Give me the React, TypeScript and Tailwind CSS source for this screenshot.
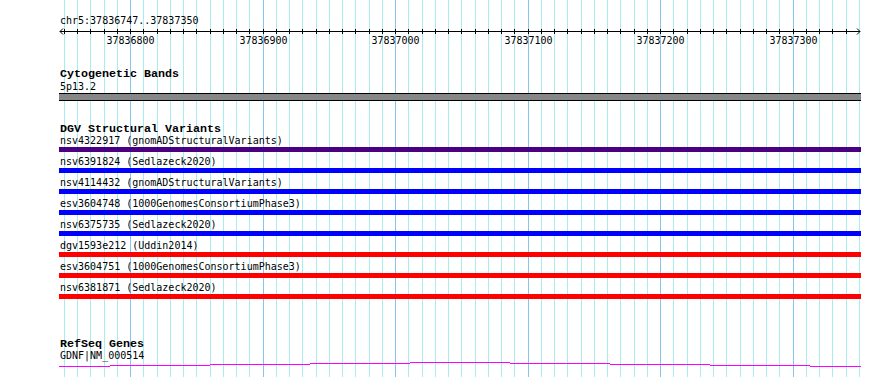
import React from "react";

const GRID = Array.from({ length: 61 }, (_, k) => ({
  x: Math.floor(64.25 + 13.25 * k) + 0.5,
  major: k % 10 === 5,
}));

const LABELS = [0, 1, 2, 3, 4, 5].map((j) => ({
  x: GRID[5 + 10 * j].x - 59,
  text: String(37836800 + 100 * j),
}));

const ROWS: { label: string; color: string }[] = [
  { label: "nsv4322917 (gnomADStructuralVariants)", color: "bg-[#4b0082]" },
  { label: "nsv6391824 (Sedlazeck2020)", color: "bg-[#0000ff]" },
  { label: "nsv4114432 (gnomADStructuralVariants)", color: "bg-[#0000ff]" },
  { label: "esv3604748 (1000GenomesConsortiumPhase3)", color: "bg-[#0000ff]" },
  { label: "nsv6375735 (Sedlazeck2020)", color: "bg-[#0000ff]" },
  { label: "dgv1593e212 (Uddin2014)", color: "bg-[#ff0000]" },
  { label: "esv3604751 (1000GenomesConsortiumPhase3)", color: "bg-[#ff0000]" },
  { label: "nsv6381871 (Sedlazeck2020)", color: "bg-[#ff0000]" },
];

// magenta gene line steps (x in track coords, y in svg coords)
const STEPS = [
  [0, 51, 6],
  [51, 151, 5],
  [151, 251, 4],
  [251, 351, 3],
  [351, 451, 2],
  [451, 551, 3],
  [551, 651, 4],
  [651, 751, 5],
  [751, 802, 6],
];

const mono = "font-['DejaVu_Sans_Mono',monospace]";
const bold = "font-['Liberation_Mono',monospace] font-bold text-[11.67px] leading-[12px] text-black";

export default function App() {
  return (
    <div className="relative w-[890px] h-[377px] overflow-hidden bg-white">
      <svg
        className="absolute inset-0 pointer-events-none"
        width={890}
        height={377}
        shapeRendering="crispEdges"
      >
        {GRID.map((g, i) => (
          <line
            key={i}
            x1={g.x}
            x2={g.x}
            y1={0}
            y2={377}
            stroke={g.major ? "#86c6ee" : "#a8ecee"}
            strokeWidth={1}
          />
        ))}
      </svg>
      <div className={`relative ml-[59px] w-[802px] ${mono} text-[10px] text-black`}>
        <div className="mt-[15px] h-[12px] leading-[12px] pl-[1px]">chr5:37836747..37837350</div>
        <svg width={802} height={19} className="block" shapeRendering="crispEdges">
          <line x1={1} x2={801} y1={4.5} y2={4.5} stroke="#000" strokeWidth={1} />
          <polyline points="4,1.5 1,4.5 4,7.5" fill="none" stroke="#000" strokeWidth={1} shapeRendering="auto" />
          <polyline points="798,1.5 801,4.5 798,7.5" fill="none" stroke="#000" strokeWidth={1} shapeRendering="auto" />
          {GRID.slice(0, 60).map((g, i) => (
            <line key={i} x1={g.x - 59} x2={g.x - 59} y1={2} y2={7} stroke="#000" strokeWidth={1} />
          ))}
          {LABELS.map((l) => (
            <text
              key={l.text}
              x={l.x}
              y={17}
              textAnchor="middle"
              fontFamily="'DejaVu Sans Mono', monospace"
              fontSize={10}
              fill="#000"
            >
              {l.text}
            </text>
          ))}
        </svg>

        <div className={`mt-[22px] h-[13px] ${bold} leading-[13px] pl-[1px]`}>Cytogenetic Bands</div>
        <div className="h-[12px] leading-[12px] pl-[1px]">5p13.2</div>
        <div className="h-[8px] border-y border-black bg-[#878787]" />

        <div className={`mt-[22px] h-[12px] ${bold} pl-[1px]`}>DGV Structural Variants</div>
        <div className="flex flex-col">
          {ROWS.map((r, i) => (
            <div key={r.label} className={i === 0 ? "" : "pt-[4px]"}>
              <div className="h-[12px] leading-[12px] pl-[1px] whitespace-nowrap">{r.label}</div>
              <div className={`h-[5px] ${r.color}`} />
            </div>
          ))}
        </div>

        <div className={`mt-[39px] h-[12px] ${bold} pl-[1px]`}>RefSeq Genes</div>
        <div className="h-[10px] leading-[12px] pl-[1px]">GDNF|NM_000514</div>
        <svg width={802} height={8} className="block" shapeRendering="crispEdges">
          {STEPS.map(([a, b, y], i) => (
            <line key={i} x1={a} x2={b} y1={y + 0.5} y2={y + 0.5} stroke="#ff00ff" strokeWidth={1} />
          ))}
        </svg>
      </div>
    </div>
  );
}
